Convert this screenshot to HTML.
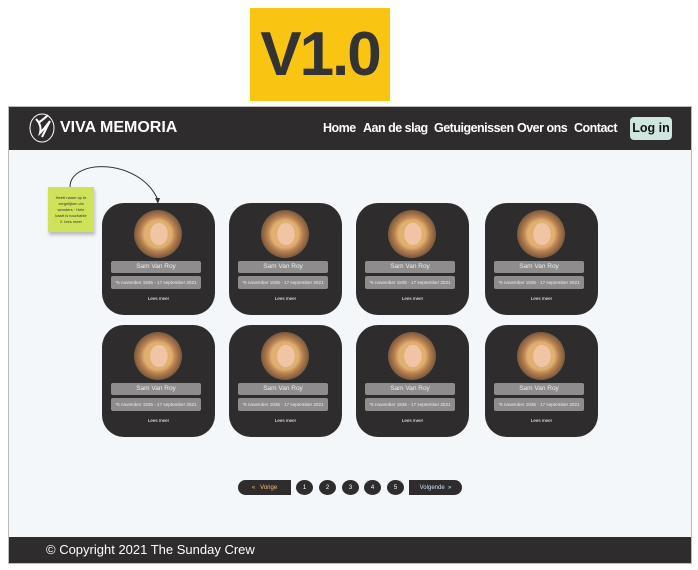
<!DOCTYPE html>
<html><head><meta charset="utf-8"><style>
*{margin:0;padding:0;box-sizing:border-box}
body{width:698px;height:570px;background:#fff;position:relative;overflow:hidden;font-family:"Liberation Sans",sans-serif}
.abs{position:absolute}
.v{left:250px;top:8px;width:140px;height:93px;background:#f9c512;color:#333;font:bold 62px/93px "Liberation Sans",sans-serif;text-align:center;letter-spacing:-2px}
.frame{left:8px;top:106px;width:684px;height:458px;background:#f3f7fa;border:1px solid #bbb}
.hdr{left:9px;top:107px;width:682px;height:43px;background:#2e2c2c}
.nav{top:121px;color:#fff;font-weight:bold;font-size:12.5px;letter-spacing:-.5px}
.login{left:630px;top:117px;width:42px;height:23px;background:#cfe5df;border-radius:4px;color:#111;font-size:12.5px;font-weight:bold;text-align:center;line-height:23px}
.card{width:113px;height:112px;background:#2e2c2c;border-radius:22px}
.av{position:absolute;left:32px;top:7px;width:48px;height:48px;border-radius:50%;background:radial-gradient(ellipse 30% 38% at 52% 50%,#f0c4a4 0 60%,transparent 62%),radial-gradient(circle at 50% 50%,#e0b070 0 40%,#b88050 52%,#6a5038 75%,#c87838 100%)}
.nm{position:absolute;left:9px;top:58px;width:90px;height:12px;background:#8e8c8c;border-radius:2px;color:#eee;font-size:6.5px;text-align:center;line-height:12px}
.dt{position:absolute;left:9px;top:73px;width:90px;height:13px;background:#8e8c8c;border-radius:2px;color:#eee;font-size:4.6px;text-align:center;line-height:13px;white-space:nowrap}
.lm{position:absolute;left:0;top:93px;width:100%;text-align:center;color:#fff;font-size:4.5px}
.pg{top:480px;height:15px;background:#2e2c2c;color:#fff;font-size:6px;display:flex;align-items:center;justify-content:center}
.c{width:17px;border-radius:50%}
.ft{left:9px;top:537px;width:682px;height:26px;background:#2e2c2c;color:#fff;font-size:13px;line-height:26px;padding-left:37px}
</style></head><body>
<div class="abs v">V1.0</div>
<div class="abs frame"></div>
<div class="abs hdr"></div>
<svg class="abs" style="left:28px;top:111px" width="30" height="34" viewBox="0 0 30 34"><ellipse cx="14" cy="17" rx="12" ry="14" fill="none" stroke="#fff" stroke-width="1"/><path d="M8 8 Q14 14 12 22 Q16 18 22 10 Q18 18 14 26 M10 12 Q16 8 20 4" fill="none" stroke="#fff" stroke-width="2"/></svg>
<div class="abs" style="left:60px;top:119px;color:#fff;font-weight:bold;font-size:16px">VIVA MEMORIA</div>
<div class="abs nav" style="left:323px">Home</div>
<div class="abs nav" style="left:363px">Aan de slag</div>
<div class="abs nav" style="left:434px">Getuigenissen</div>
<div class="abs nav" style="left:517px">Over ons</div>
<div class="abs nav" style="left:574px">Contact</div>
<div class="abs login">Log in</div>
<div class="abs" style="left:48px;top:187px;width:46px;height:45px;background:#cfe25a;box-shadow:1px 3px 3px #bbb;font-size:4px;color:#333;text-align:center;padding-top:8px;line-height:6px">Heeft naam op te<br>vergelijken via<br>wonders · Hele<br>kaart is touchable<br>2. lees meer</div>
<svg class="abs" style="left:60px;top:158px" width="110" height="50"><path d="M10 29 C10 0 80 0 98 42" fill="none" stroke="#333" stroke-width="1"/><path d="M95 40 L98 46 L100 40 Z" fill="#333"/></svg>
<div id="cards"></div>
<div class="abs pg" style="left:238px;width:53px;border-radius:8px 0 0 8px;color:#f3c070">«&nbsp;&nbsp;&nbsp;Vorige</div>
<div class="abs pg c" style="left:296px">1</div>
<div class="abs pg c" style="left:319px">2</div>
<div class="abs pg c" style="left:342px">3</div>
<div class="abs pg c" style="left:364px">4</div>
<div class="abs pg c" style="left:387px">5</div>
<div class="abs pg" style="left:409px;width:53px;border-radius:0 8px 8px 0;color:#c9e0f5">Volgende&nbsp;&nbsp;»</div>
<div class="abs ft">© Copyright 2021 The Sunday Crew</div>
<script>
var xs=[102,229,356,485],ys=[203,325],h='';
ys.forEach(function(y){xs.forEach(function(x){h+='<div class="abs card" style="left:'+x+'px;top:'+y+'px"><div class="av"></div><div class="nm">Sam Van Roy</div><div class="dt">*5 november 1935 - 17 september 2021</div><div class="lm">Lees meer</div></div>';});});
document.getElementById('cards').innerHTML=h;
</script>
</body></html>
